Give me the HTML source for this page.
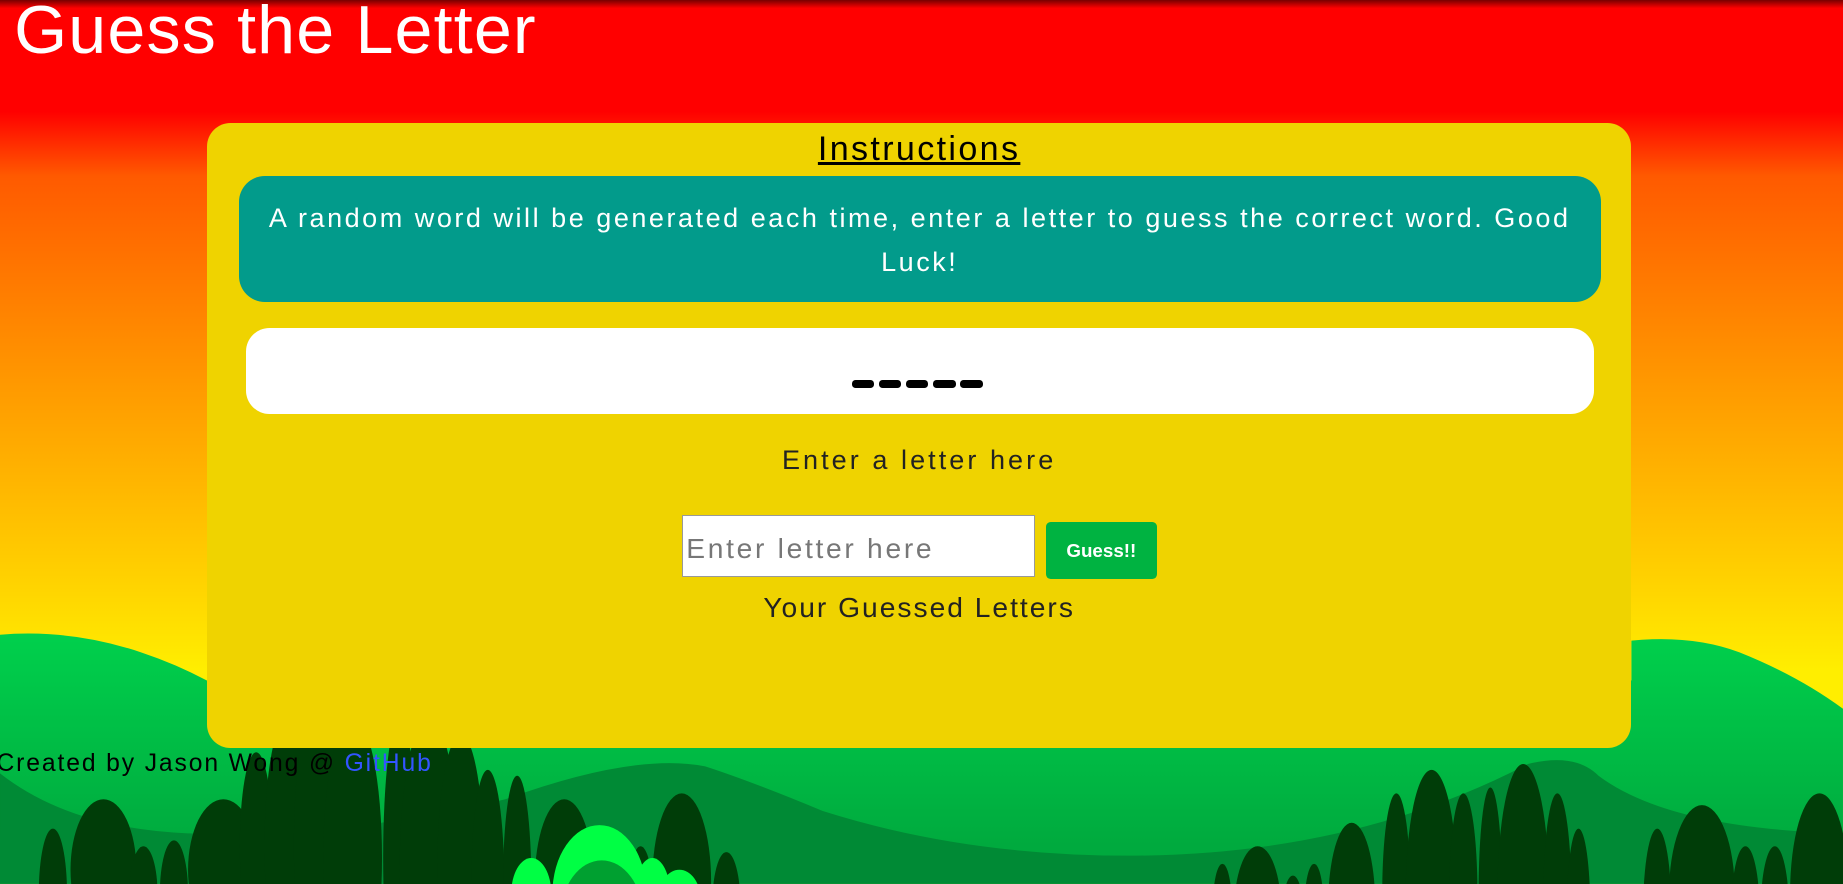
<!DOCTYPE html>
<html><head><meta charset="utf-8"><style>
html,body{margin:0;padding:0;overflow:hidden;height:884px}
body{width:1843px;height:884px}
#w{zoom:1.17538;width:1568px;height:752px;position:relative;overflow:hidden;font-family:"Liberation Sans",sans-serif;
background:linear-gradient(#700 0px,#f00 7px,#f00 95px,#ff5a00 150px,#ff9a00 330px,#ffd400 500px,#ffee00 570px);}
svg.bg{position:absolute;left:0;top:0;display:block}
h1{position:absolute;left:12px;top:-8px;margin:0;font-weight:normal;color:#fff;font-size:58px;letter-spacing:1px}
.card{position:absolute;left:176px;top:105px;width:1212px;height:531px;background:#efd300;border-radius:20px;text-align:center}
.ins{position:absolute;left:0;right:0;top:6px;font-size:29px;letter-spacing:2px;text-decoration:underline;color:#000}
.teal{position:absolute;left:27px;top:45px;width:1159px;height:107px;background:#029b8b;border-radius:22px;color:#fff;font-size:23px;letter-spacing:2.15px;line-height:37px;box-sizing:border-box;padding:18px 22px 0}
.white{position:absolute;left:33px;top:174px;width:1147px;height:73px;background:#fff;border-radius:20px}
.dash{position:absolute;top:44px;left:516px;display:flex;gap:4px}
.dash i{display:block;width:19px;height:7px;background:#000;border-radius:3px}
.enter{position:absolute;left:0;right:0;top:274px;font-size:23px;letter-spacing:2.6px;color:#222}
.inp{position:absolute;left:404px;top:333px;width:301px;height:53px;background:#fff;border:1px solid #999;color:#777;font-size:24px;letter-spacing:2.3px;text-align:left;line-height:56px;padding-left:3px;box-sizing:border-box}
.btn{position:absolute;left:714px;top:339px;width:94px;height:49px;background:#00b341;border-radius:4px;color:#fff;font-size:16px;line-height:50px;font-weight:bold}
.yg{position:absolute;left:0;right:0;top:398px;font-size:24px;letter-spacing:1.7px;color:#222}
.foot{position:absolute;left:-3px;top:638px;font-size:21px;letter-spacing:1.6px;color:#000}
.foot span{color:#3355ff}
</style></head><body><div id="w">
<svg class="bg" width="1568" height="752" viewBox="0 0 1568 752">
<defs><linearGradient id="g" x1="0" y1="540" x2="0" y2="720" gradientUnits="userSpaceOnUse"><stop offset="0" stop-color="#00d04c"/><stop offset="1" stop-color="#00aa3e"/></linearGradient></defs>
<path d="M0 540 Q60 535 120 555 Q150 565 176 579 L1388 579 L1388 545 Q1440 540 1480 555 Q1530 575 1568 603 L1568 752 L0 752Z" fill="url(#g)"/>
<path d="M0 658 Q60 705 160 709 Q300 712 430 680 Q540 640 600 652 Q640 665 700 690 Q820 728 960 728 Q1150 728 1300 650 Q1340 640 1360 660 Q1420 705 1568 709 L1568 752 L0 752Z" fill="#008a35"/>
<g fill="#003d08">
<ellipse cx="88" cy="740" rx="28" ry="60"/><ellipse cx="45" cy="760" rx="12" ry="55"/><ellipse cx="122" cy="760" rx="12" ry="40"/><ellipse cx="148" cy="760" rx="12" ry="45"/>
<ellipse cx="190" cy="740" rx="30" ry="60"/><ellipse cx="218" cy="720" rx="14" ry="80"/><ellipse cx="245" cy="720" rx="20" ry="110"/><ellipse cx="272" cy="720" rx="22" ry="130"/>
<ellipse cx="300" cy="730" rx="25" ry="120"/><ellipse cx="340" cy="730" rx="14" ry="120"/><ellipse cx="365" cy="740" rx="25" ry="130"/><ellipse cx="392" cy="740" rx="20" ry="115"/><ellipse cx="415" cy="750" rx="14" ry="95"/><ellipse cx="440" cy="750" rx="12" ry="90"/>
<ellipse cx="480" cy="750" rx="25" ry="70"/><ellipse cx="545" cy="760" rx="10" ry="40"/><ellipse cx="580" cy="750" rx="25" ry="75"/><ellipse cx="618" cy="770" rx="12" ry="45"/>
<ellipse cx="1040" cy="770" rx="8" ry="35"/><ellipse cx="1070" cy="775" rx="20" ry="55"/><ellipse cx="1100" cy="770" rx="8" ry="25"/><ellipse cx="1118" cy="770" rx="8" ry="35"/>
<ellipse cx="1150" cy="770" rx="20" ry="70"/><ellipse cx="1188" cy="760" rx="12" ry="85"/><ellipse cx="1218" cy="760" rx="22" ry="105"/><ellipse cx="1245" cy="760" rx="12" ry="85"/><ellipse cx="1268" cy="760" rx="10" ry="90"/>
<ellipse cx="1296" cy="760" rx="22" ry="110"/><ellipse cx="1325" cy="765" rx="12" ry="90"/><ellipse cx="1343" cy="775" rx="10" ry="70"/>
<ellipse cx="1410" cy="775" rx="12" ry="70"/><ellipse cx="1448" cy="760" rx="28" ry="75"/><ellipse cx="1485" cy="775" rx="12" ry="55"/><ellipse cx="1510" cy="775" rx="12" ry="55"/><ellipse cx="1548" cy="760" rx="25" ry="85"/>
</g>
<g fill="#00ff44"><ellipse cx="510" cy="760" rx="40" ry="58"/><ellipse cx="452" cy="760" rx="17" ry="30"/><ellipse cx="555" cy="760" rx="15" ry="30"/><ellipse cx="578" cy="765" rx="18" ry="25"/></g>
<ellipse cx="512" cy="780" rx="35" ry="48" fill="#00a030"/>
</svg>
<h1>Guess the Letter</h1>
<div class="card">
<div class="ins">Instructions</div>
<div class="teal">A random word will be generated each time, enter a letter to guess the correct word. Good Luck!</div>
<div class="white"><div class="dash"><i></i><i></i><i></i><i></i><i></i></div></div>
<div class="enter">Enter a letter here</div>
<div class="inp">Enter letter here</div>
<div class="btn">Guess!!</div>
<div class="yg">Your Guessed Letters</div>
</div>
<div class="foot">Created by Jason Wong @ <span>GitHub</span></div>
</div></body></html>
